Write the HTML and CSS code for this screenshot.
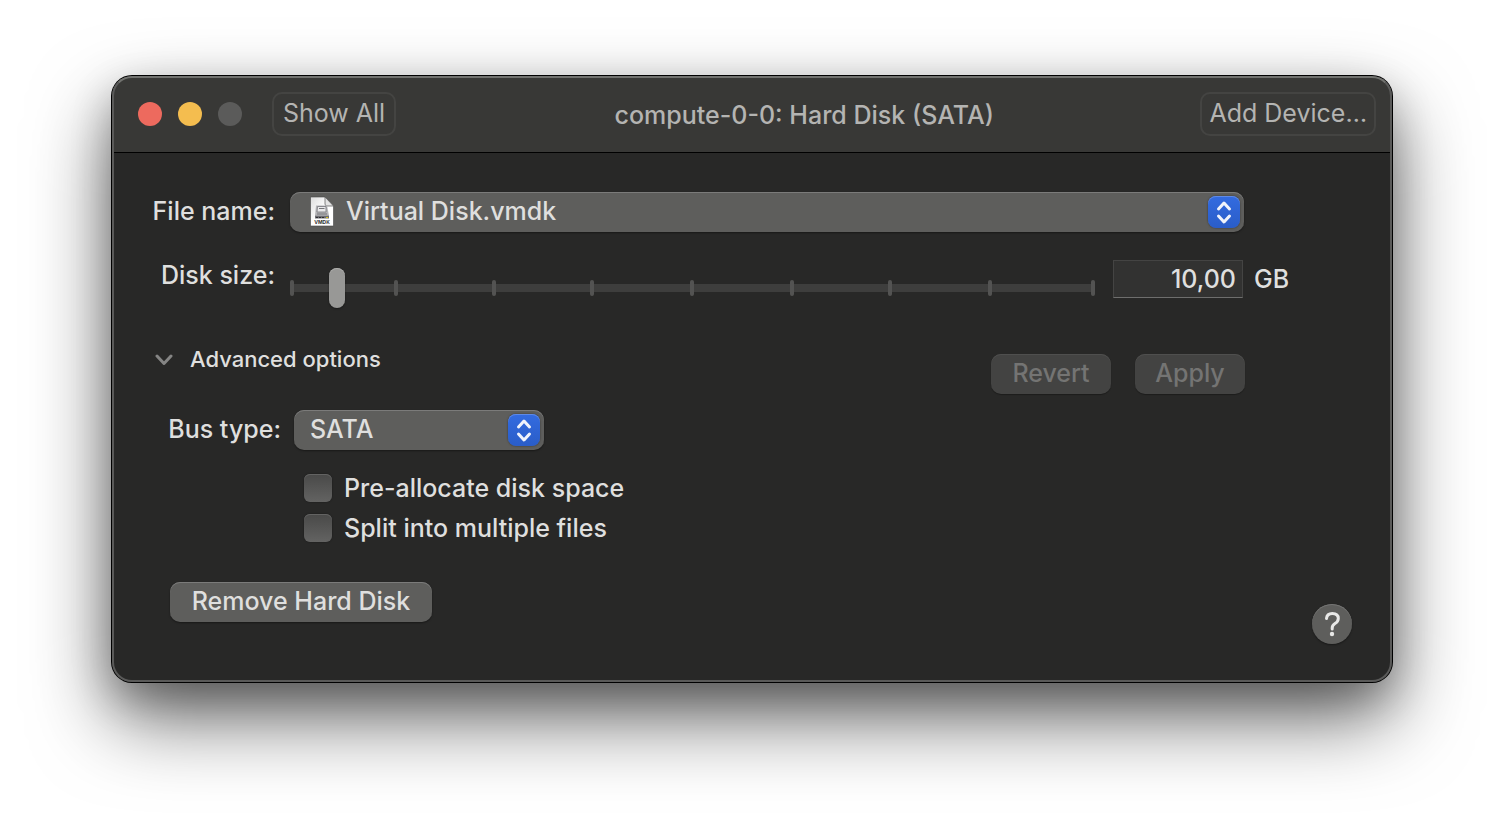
FILE: index.html
```html
<!DOCTYPE html>
<html lang="en">
<head>
<meta charset="utf-8">
<title>compute-0-0: Hard Disk (SATA)</title>
<link rel="stylesheet" href="styles.css">
</head>
<body>
<main class="window">
  <header class="titlebar">
    <div class="lights">
      <button class="light light-close" aria-label="Close"></button>
      <button class="light light-min" aria-label="Minimize"></button>
      <button class="light" aria-label="Zoom" disabled></button>
    </div>
    <button class="tool">Show All</button>
    <h1 class="title">compute-0-0: Hard Disk (SATA)</h1>
    <button class="tool">Add Device…</button>
  </header>
  <div class="content">
    <div class="row">
      <label class="label" for="file">File name:</label>
      <div class="popup popup-file">
        <select id="file"><option>Virtual Disk.vmdk</option></select>
        <svg class="file-icon" viewBox="0 0 24 31" aria-hidden="true">
          <defs><linearGradient id="paper" x1="0" y1="0" x2="1" y2="1"><stop offset="0" stop-color="#dcdcdc"/><stop offset=".5" stop-color="#fff"/></linearGradient></defs>
          <path d="M.5 1H15l8.500 9v20H.5z" fill="url(#paper)" stroke="#444" stroke-width=".6"/>
          <path d="M15 1l8.500 9H17q-2 0-2-2z" fill="#e4e4e4" stroke="#555" stroke-width=".7"/>
          <path d="M6 9.500h11l2 10H5z" fill="#b4b4b7"/>
          <path d="M7.500 10.500h8.500v5.500H7z" fill="#e9e9eb" stroke="#808084" stroke-width=".9"/>
          <path d="M9 12.500h5.500M7 18h10" stroke="#77777a"/>
          <path d="M5 19.500h14v3H5z" fill="#6d6d72"/>
          <path d="M6 21.500h8" stroke="#2c2c30" stroke-dasharray="2 1"/>
          <path d="M16 21.500h2" stroke="#d8c020"/>
          <text class="file-kind" x="12" y="28" text-anchor="middle">VMDK</text>
        </svg>
        <svg class="stepper" viewBox="0 0 32 32" aria-hidden="true"><path d="M10.500 13l5.500-6 5.500 6M10.500 20l5.500 6 5.500-6"/></svg>
      </div>
    </div>
    <div class="row row-size">
      <label class="label" for="size">Disk size:</label>
      <div class="slider">
        <div class="ticks"><i></i><i></i><i></i><i></i><i></i><i></i><i></i><i></i><i></i></div>
        <input id="size" class="range" type="range" min="0" max="100" step="any" value="5">
      </div>
      <input class="amount" type="text" value="10,00" aria-label="Disk size in gigabytes">
      <span class="unit">GB</span>
    </div>
    <div class="row row-advanced">
      <button class="disclosure" aria-expanded="true">
        <svg class="chevron" viewBox="0 0 18 12" aria-hidden="true"><path d="M2 3l7 7.500 7-7.500"/></svg>
        Advanced options
      </button>
      <div class="actions">
        <button class="push" disabled>Revert</button>
        <button class="push push-apply" disabled>Apply</button>
      </div>
    </div>
    <div class="row row-bus">
      <label class="label label-bus" for="bus">Bus type:</label>
      <div class="popup popup-bus">
        <select id="bus"><option>SATA</option></select>
        <svg class="stepper" viewBox="0 0 32 32" aria-hidden="true"><path d="M10.500 13l5.500-6 5.500 6M10.500 20l5.500 6 5.500-6"/></svg>
      </div>
    </div>
    <div class="checks">
      <label class="check"><input type="checkbox">Pre-allocate disk space</label>
      <label class="check"><input type="checkbox">Split into multiple files</label>
    </div>
    <div class="footer">
      <button class="push push-remove">Remove Hard Disk</button>
      <button class="help" aria-label="Help">
        <svg viewBox="0 0 40 40" aria-hidden="true"><path d="M14.500 14.500q.500-5 5.800-5 6 0 6 5 0 3-3.300 5-2.800 1.700-2.800 4.500v1" fill="none" stroke="#e8e8e7" stroke-width="3" stroke-linecap="round"/><circle cx="20" cy="30" r="2.200" fill="#e8e8e7"/></svg>
      </button>
    </div>
  </div>
</main>
</body>
</html>
```
FILE: styles.css
```css
* { box-sizing: border-box; }
body {
  min-height: 100vh;
  margin: 0;
  padding: 76px 112px;
  background: #fff;
  color: #dfdfde;
  font: 450 25px/32px Inter, "Liberation Sans", sans-serif;
}
button, input, select { margin: 0; font: inherit; color: inherit; }
button { border: 0; }

.window {
  position: relative;
  border-radius: 20px;
  background: #282827;
  box-shadow: 0 0 0 1px #000, 0 36px 80px rgba(0, 0, 0, .6), 0 16px 40px rgba(0, 0, 0, .24);
}
.window::after {
  content: "";
  position: absolute;
  inset: 0;
  border: 2px solid #5a5a59;
  border-top-color: #71726f;
  border-radius: 20px;
  pointer-events: none;
}

.titlebar {
  display: flex;
  align-items: center;
  height: 77px;
  padding: 0 16px 0 26px;
  border-bottom: 1px solid #000;
  border-radius: 20px 20px 0 0;
  background: #383836;
  color: #b4b4b2;
}
.lights { display: flex; gap: 16px; margin-right: 30px; }
.light { width: 24px; height: 24px; padding: 0; border-radius: 50%; background: #5b5b5a; }
.light-close { background: #ed6a5e; }
.light-min { background: #f4bd4f; }
.tool {
  min-width: 124px;
  height: 44px;
  padding: 0 7px 2px;
  border: 2px solid #444442;
  border-radius: 10px;
  background: transparent;
  font-weight: 400;
  line-height: 38px;
}
.title { flex: 1; margin: 0; padding: 2px 0 0 12px; font-size: 25px; font-weight: 450; text-align: center; }

.content { padding: 39px 40px 38px; }
.row { display: flex; align-items: flex-start; }
.label { flex: none; width: 123px; margin-right: 15px; padding-top: 3px; text-align: right; }

.popup { position: relative; }
.popup-file { flex: 1; margin-right: 108px; }
.popup-bus { width: 250px; }
.popup select {
  display: block;
  width: 100%;
  height: 40px;
  padding: 0 40px 2px 16px;
  border: 0;
  border-radius: 10px;
  background: #5e5e5c;
  box-shadow: inset 0 1px #7b7b7a, 0 1px 2px rgba(0, 0, 0, .4);
  appearance: none;
}
.popup-file select { padding-left: 56px; }
.file-icon { position: absolute; top: 4px; left: 20px; width: 24px; height: 31px; }
.file-kind { font: 700 5px Inter, sans-serif; fill: #333; }
.stepper {
  position: absolute;
  top: 4px;
  right: 4px;
  width: 32px;
  height: 32px;
  border-radius: 8px;
  background: linear-gradient(#336be0, #2a5dc8);
  box-shadow: inset 0 1px #5f8ae6, 0 0 2px rgba(0, 0, 0, .5);
  fill: none;
  stroke: #f0f3fb;
  stroke-width: 3;
  stroke-linecap: round;
  stroke-linejoin: round;
  pointer-events: none;
}

.row-size { margin-top: 28px; }
.row-size .label { padding-top: 0; line-height: 30px; }
.slider { position: relative; flex: 1; margin: 8px 18px 0 0; }
.ticks {
  position: absolute;
  inset: 12px 0;
  display: grid;
  grid-template-columns: 104fr 98fr 98fr 100fr 100fr 98fr 100fr 103fr 4px;
}
.ticks::before { content: ""; position: absolute; inset: 4px 0; background: #3e3e3d; }
.ticks i { position: relative; width: 4px; border-radius: 2px; background: #535352; }
.range { position: relative; display: block; width: 100%; height: 40px; background: transparent; appearance: none; }
.range::-webkit-slider-thumb {
  width: 16px;
  height: 40px;
  border-radius: 8px;
  background: #989896;
  box-shadow: inset 0 1px #adadab, 0 1px 2px rgba(0, 0, 0, .4);
  appearance: none;
}
.amount {
  width: 130px;
  height: 38px;
  padding: 0 6px;
  border: 1px solid #444443;
  border-bottom: 1px solid #6e6e6d;
  background: #323231;
  text-align: right;
}
.unit { width: 109px; padding: 3px 0 0 11px; }

.row-advanced { justify-content: space-between; margin-top: 35px; }
.disclosure { display: flex; align-items: center; gap: 17px; padding: 0 3px; background: transparent; font-size: 22px; }
.chevron { width: 18px; height: 12px; fill: none; stroke: #858584; stroke-width: 3; stroke-linecap: round; stroke-linejoin: round; }
.actions { display: flex; gap: 24px; margin: 11px 107px 0 0; }
.push {
  min-width: 120px;
  height: 40px;
  padding: 0 18px 2px;
  border-radius: 10px;
  background: #5e5e5c;
  box-shadow: inset 0 1px #7b7b7a, 0 1px 2px rgba(0, 0, 0, .4);
}
.push:disabled { background: #434342; box-shadow: inset 0 1px #4f4f4e, 0 1px 1px rgba(0, 0, 0, .3); color: #747473; }
.push-apply { min-width: 110px; }

.row-bus { margin-top: 16px; }
.label-bus { width: 129px; margin-right: 13px; }
.checks { display: grid; justify-content: start; gap: 8px; margin: 22px 0 0 152px; }
.check { display: flex; align-items: center; gap: 12px; }
.check input {
  width: 28px;
  height: 28px;
  border-radius: 6px;
  background: linear-gradient(#494948, #636362);
  box-shadow: inset 0 1px #636362, 0 0 2px rgba(0, 0, 0, .4);
  appearance: none;
}
.footer { display: flex; justify-content: space-between; margin-top: 38px; padding-left: 18px; }
.push-remove { min-width: 262px; }
.help {
  width: 40px;
  height: 40px;
  margin-top: 22px;
  padding: 0;
  border-radius: 50%;
  background: #5e5e5c;
  box-shadow: inset 0 1px #747473, 0 1px 2px rgba(0, 0, 0, .4);
}
.help svg { display: block; width: 40px; height: 40px; }
```
